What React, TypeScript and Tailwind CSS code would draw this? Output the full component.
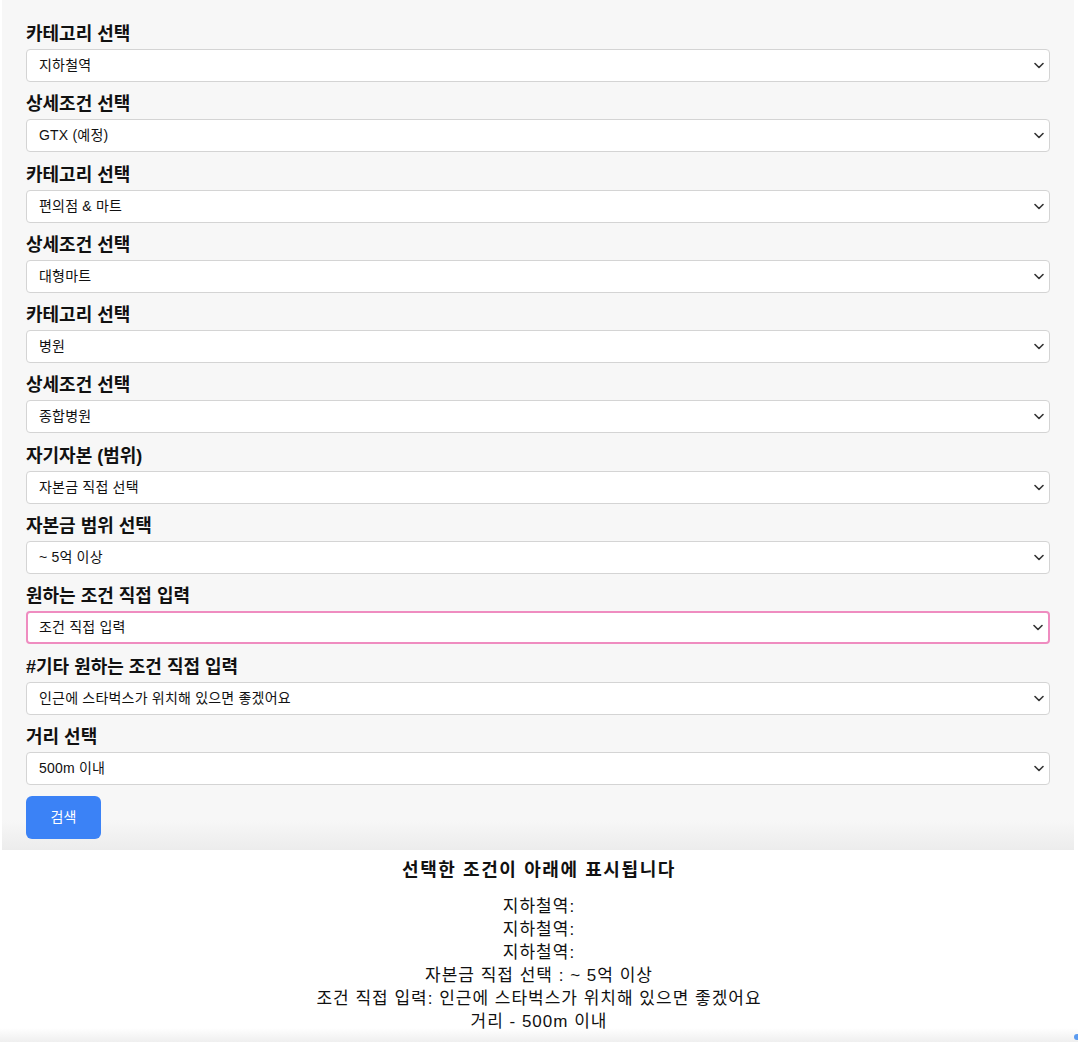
const fields = [
  { label: '카테고리 선택', value: '지하철역' },
  { label: '상세조건 선택', value: 'GTX (예정)' },
  { label: '카테고리 선택', value: '편의점 & 마트' },
  { label: '상세조건 선택', value: '대형마트' },
  { label: '카테고리 선택', value: '병원' },
  { label: '상세조건 선택', value: '종합병원' },
  { label: '자기자본 (범위)', value: '자본금 직접 선택' },
  { label: '자본금 범위 선택', value: '~ 5억 이상' },
  { label: '원하는 조건 직접 입력', value: '조건 직접 입력', focused: true },
  { label: '#기타 원하는 조건 직접 입력', value: '인근에 스타벅스가 위치해 있으면 좋겠어요' },
  { label: '거리 선택', value: '500m 이내' },
];

const summary = [
  '지하철역:',
  '지하철역:',
  '지하철역:',
  '자본금 직접 선택 : ~ 5억 이상',
  '조건 직접 입력: 인근에 스타벅스가 위치해 있으면 좋겠어요',
  '거리 - 500m 이내',
];

function Chevron() {
  return (
    <svg width="10" height="7" viewBox="0 0 10 7" className="shrink-0">
      <path d="M1 1.5 L5 5.5 L9 1.5" fill="none" stroke="#333" strokeWidth="1.6" strokeLinecap="round" strokeLinejoin="round" />
    </svg>
  );
}

function Field({ label, value, focused }: { label: string; value: string; focused?: boolean }) {
  const ring = focused ? 'border-2 border-[#ef8cc0] pl-[11px]' : 'border border-[#d4d4d4] pl-[12px]';
  return (
    <div className="mb-[10.3px]">
      <div className="text-[18px] font-bold leading-[24px] text-[#111]">{label}</div>
      <div
        role="combobox"
        className={'mt-[3px] flex h-[33px] items-center justify-between gap-2 rounded-[4px] bg-white pr-[5px] ' + ring}
      >
        <span className="truncate text-[14px] tracking-[0.2px] text-[#111]">{value}</span>
        <Chevron />
      </div>
    </div>
  );
}

export default function App() {
  return (
    <div className="min-h-[1042px] bg-white font-['Liberation_Sans','Noto_Sans_CJK_KR',sans-serif]">
      {/* form panel */}
      <div className="mx-[2px] w-[1072px] bg-[linear-gradient(to_bottom,#f7f7f7_0,#f7f7f7_820px,#ececec_850px)] px-[24px] pb-[11px] pt-[22px]">
        {fields.map((f, i) => (
          <Field key={i} label={f.label} value={f.value} focused={f.focused} />
        ))}
        <button className="mt-[1px] h-[43px] w-[75px] rounded-[6px] bg-[#3b82f6] text-[14px] text-white">검색</button>
      </div>

      {/* result */}
      <div className="relative h-[192px] bg-[linear-gradient(to_bottom,#fff_0,#fff_178px,#efefef_192px)] text-center text-[#111]">
        <h3 className="pt-[8px] text-[18px] font-bold leading-[24px] tracking-[1.6px]">선택한 조건이 아래에 표시됩니다</h3>
        <div className="mt-[13px] text-[17px] leading-[23px] tracking-[1px]">
          {summary.map((s, i) => (
            <p key={i}>{s}</p>
          ))}
        </div>
        <span className="absolute bottom-[2px] right-0 h-[6px] w-[4px] rounded-l-full bg-[#5b9bf0]" />
      </div>
    </div>
  );
}
